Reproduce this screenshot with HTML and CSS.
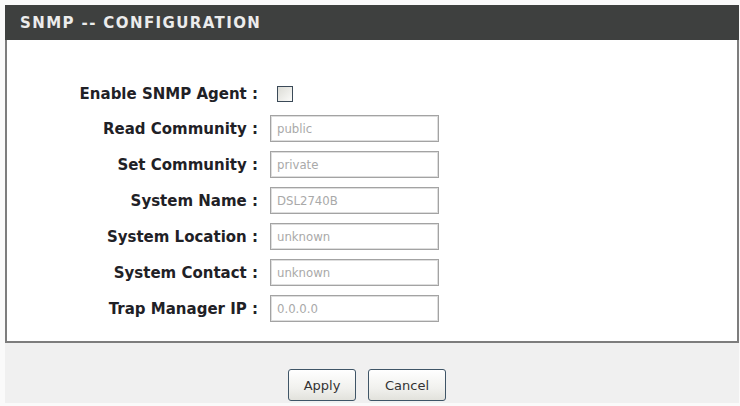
FILE: index.html
```html
<!DOCTYPE html>
<html lang="en">
<head>
  <meta charset="UTF-8" />
  <title>SNMP Configuration</title>
  <link rel="stylesheet" href="styles.css">
</head>
<body>
  <div class="panel">
    <div class="panel-title">SNMP -- CONFIGURATION</div>

    <form id="snmpForm">
      <div class="panel-body">
        <div class="fields">
          <label class="field-label" for="snmpEnable">Enable SNMP Agent :</label>
          <div class="field-check"><input type="checkbox" id="snmpEnable" /></div>

          <label class="field-label" for="readComm">Read Community :</label>
          <input class="field-input" type="text" id="readComm" value="public" disabled />

          <label class="field-label" for="setComm">Set Community :</label>
          <input class="field-input" type="text" id="setComm" value="private" disabled />

          <label class="field-label" for="sysName">System Name :</label>
          <input class="field-input" type="text" id="sysName" value="DSL2740B" disabled />

          <label class="field-label" for="sysLocation">System Location :</label>
          <input class="field-input" type="text" id="sysLocation" value="unknown" disabled />

          <label class="field-label" for="sysContact">System Contact :</label>
          <input class="field-input" type="text" id="sysContact" value="unknown" disabled />

          <label class="field-label" for="trapIp">Trap Manager IP :</label>
          <input class="field-input" type="text" id="trapIp" value="0.0.0.0" disabled />
        </div>
      </div>

      <div class="panel-actions">
        <button type="button" class="btn btn-apply">Apply</button>
        <button type="button" class="btn btn-cancel">Cancel</button>
      </div>
    </form>
  </div>
</body>
</html>
```

FILE: styles.css
```css
:root {
  --title-bg: #3e403f;
  --title-text: #ececec;
  --frame: #7d7d7d;
  --label: #1f2126;
  --value: #a9a9a9;
  --footer-bg: #f0f0f0;
}

* {
  box-sizing: border-box;
  margin: 0;
  padding: 0;
}

body {
  background: #fafafa;
  font-family: 'DejaVu Sans', sans-serif;
  padding-top: 5px;
}

.panel {
  width: 734px;
  margin-left: 5px;
}

.panel-title {
  height: 35px;
  background: var(--title-bg);
  color: var(--title-text);
  font-size: 15px;
  font-weight: bold;
  letter-spacing: 1.4px;
  line-height: 37px;
  padding-left: 15px;
}

.panel-body {
  background: #fff;
  border: 2px solid var(--frame);
  border-top: none;
  padding: 42px 0 19px;
}

.fields {
  display: grid;
  grid-template-columns: 251px 169px;
  grid-auto-rows: 27px;
  grid-template-rows: 24px;
  column-gap: 12px;
  row-gap: 9px;
  align-items: center;
}

.field-label {
  text-align: right;
  font-size: 15px;
  font-weight: bold;
  color: var(--label);
}

.field-check {
  display: flex;
  align-items: center;
}

.field-check input {
  appearance: none;
  width: 16px;
  height: 16px;
  margin-left: 7px;
  border: 1px solid #3b4a58;
  background: linear-gradient(135deg, #dcdcd6, #fbfbf9);
}

.field-input {
  width: 169px;
  height: 27px;
  border: 1px solid #a3a3a3;
  box-shadow: inset 0 0 0 1px #dedede;
  background: #fff;
  padding: 0 6px;
  font-family: 'DejaVu Sans Condensed', sans-serif;
  font-size: 13px;
  color: var(--value);
}

.panel-actions {
  height: 60px;
  background: var(--footer-bg);
  display: flex;
  justify-content: center;
  gap: 12px;
  padding-top: 26px;
  padding-right: 10px;
}

.btn {
  height: 32px;
  border: 1px solid #3f5567;
  border-radius: 3px;
  background: linear-gradient(#ffffff, #f1f1ee 60%, #e2e2dc);
  font-family: 'DejaVu Sans', sans-serif;
  font-size: 13px;
  color: #333;
}

.btn-apply {
  width: 68px;
}

.btn-cancel {
  width: 78px;
}
```
